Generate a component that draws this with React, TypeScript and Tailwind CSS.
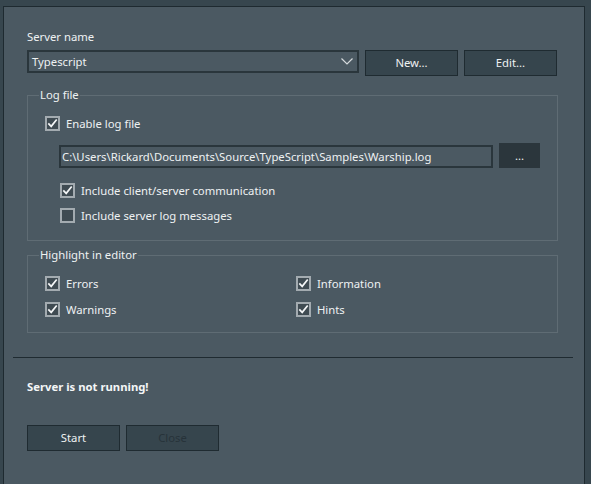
import React from 'react';

const font = { fontFamily: '"Noto Sans", "Open Sans", sans-serif' };

function CheckBox({ checked, label }: { checked: boolean; label: string }) {
  return (
    <div className="flex items-center h-[15px] gap-[6px]">
      <div className="w-[15px] h-[15px] border-2 border-[#a3abb0] bg-[#3f4b52] flex items-center justify-center shrink-0">
        {checked && (
          <svg width="11" height="11" viewBox="0 0 11 11">
            <path d="M1.3 5.4 L4.2 8.4 L9.7 1.5" stroke="#f4f6f7" strokeWidth="1.7" fill="none" />
          </svg>
        )}
      </div>
      <span className="text-[11.3px] leading-[16px] text-[#eef1f2] whitespace-nowrap">{label}</span>
    </div>
  );
}

function Button({ label, disabled }: { label: string; disabled?: boolean }) {
  return (
    <button
      className={`h-[26px] w-[93px] bg-[#36454d] border border-[#1f2b31] text-[11.3px] leading-[16px] ${
        disabled ? 'text-[#27333a]' : 'text-[#eef1f2]'
      }`}
    >
      {label}
    </button>
  );
}

function GroupBox({ title, className, children }: { title: string; className?: string; children: React.ReactNode }) {
  return (
    <div className={`relative border border-[#5f6c74] ${className ?? ''}`}>
      <span className="absolute left-[11px] top-[-9px] px-[1px] bg-[#4b5962] text-[11.3px] leading-[16px] text-[#eef1f2]">
        {title}
      </span>
      {children}
    </div>
  );
}

export default function App() {
  return (
    <div className="w-[591px] h-[484px] bg-[#37464e] overflow-hidden pt-[6px] pl-[3px]" style={font}>
      <div className="w-[582px] h-[478px] bg-[#4b5962] border-l border-t border-r border-[#1e2a30] flex flex-col">
        <div className="pl-[23px] pt-[22px] flex flex-col w-[554px]">
          <span className="text-[11.3px] leading-[16px] text-[#eef1f2]">Server name</span>

          <div className="flex items-start gap-[6px] mt-[5px]">
            <div className="w-[332px] h-[23px] border-2 border-[#2a363c] flex items-center justify-between pl-[3px] pr-[4px]">
              <span className="text-[11.3px] leading-[16px] text-[#eef1f2]">Typescript</span>
              <svg width="12" height="7" viewBox="0 0 12 7">
                <path d="M0.5 0.5 L6 6 L11.5 0.5" stroke="#d5dadc" strokeWidth="1.2" fill="none" />
              </svg>
            </div>
            <Button label="New..." />
            <Button label="Edit..." />
          </div>

          <GroupBox title="Log file" className="mt-[19px] h-[146px] pl-[17px] pt-[20px]">
            <CheckBox checked label="Enable log file" />
            <div className="flex items-end gap-[6px] mt-[12px] ml-[14px]">
              <div className="w-[434px] h-[23px] border-2 border-[#2a363c] flex items-center pl-[1px]">
                <span className="text-[11.3px] leading-[16px] text-[#eef1f2] whitespace-nowrap">
                  C:\Users\Rickard\Documents\Source\TypeScript\Samples\Warship.log
                </span>
              </div>
              <button className="w-[41px] h-[25px] bg-[#2b363c] text-[11.3px] leading-[16px] text-[#eef1f2]">...</button>
            </div>
            <div className="flex flex-col gap-[10px] mt-[15px] ml-[15px]">
              <CheckBox checked label="Include client/server communication" />
              <CheckBox checked={false} label="Include server log messages" />
            </div>
          </GroupBox>

          <GroupBox title="Highlight in editor" className="mt-[14px] h-[78px] pl-[17px] pt-[20px]">
            <div className="grid grid-cols-[251px_1fr] gap-y-[11px]">
              <CheckBox checked label="Errors" />
              <CheckBox checked label="Information" />
              <CheckBox checked label="Warnings" />
              <CheckBox checked label="Hints" />
            </div>
          </GroupBox>
        </div>

        <div className="ml-[9px] w-[560px] mt-[24px] border-t border-[#1f2b31] h-[1px] bg-[#56646c]" />

        <div className="pl-[23px] flex flex-col">
          <span className="mt-[21px] text-[11.3px] leading-[16px] font-bold text-[#f4f6f7]">Server is not running!</span>
          <div className="flex gap-[6px] mt-[30px]">
            <Button label="Start" />
            <Button label="Close" disabled />
          </div>
        </div>
      </div>
    </div>
  );
}
